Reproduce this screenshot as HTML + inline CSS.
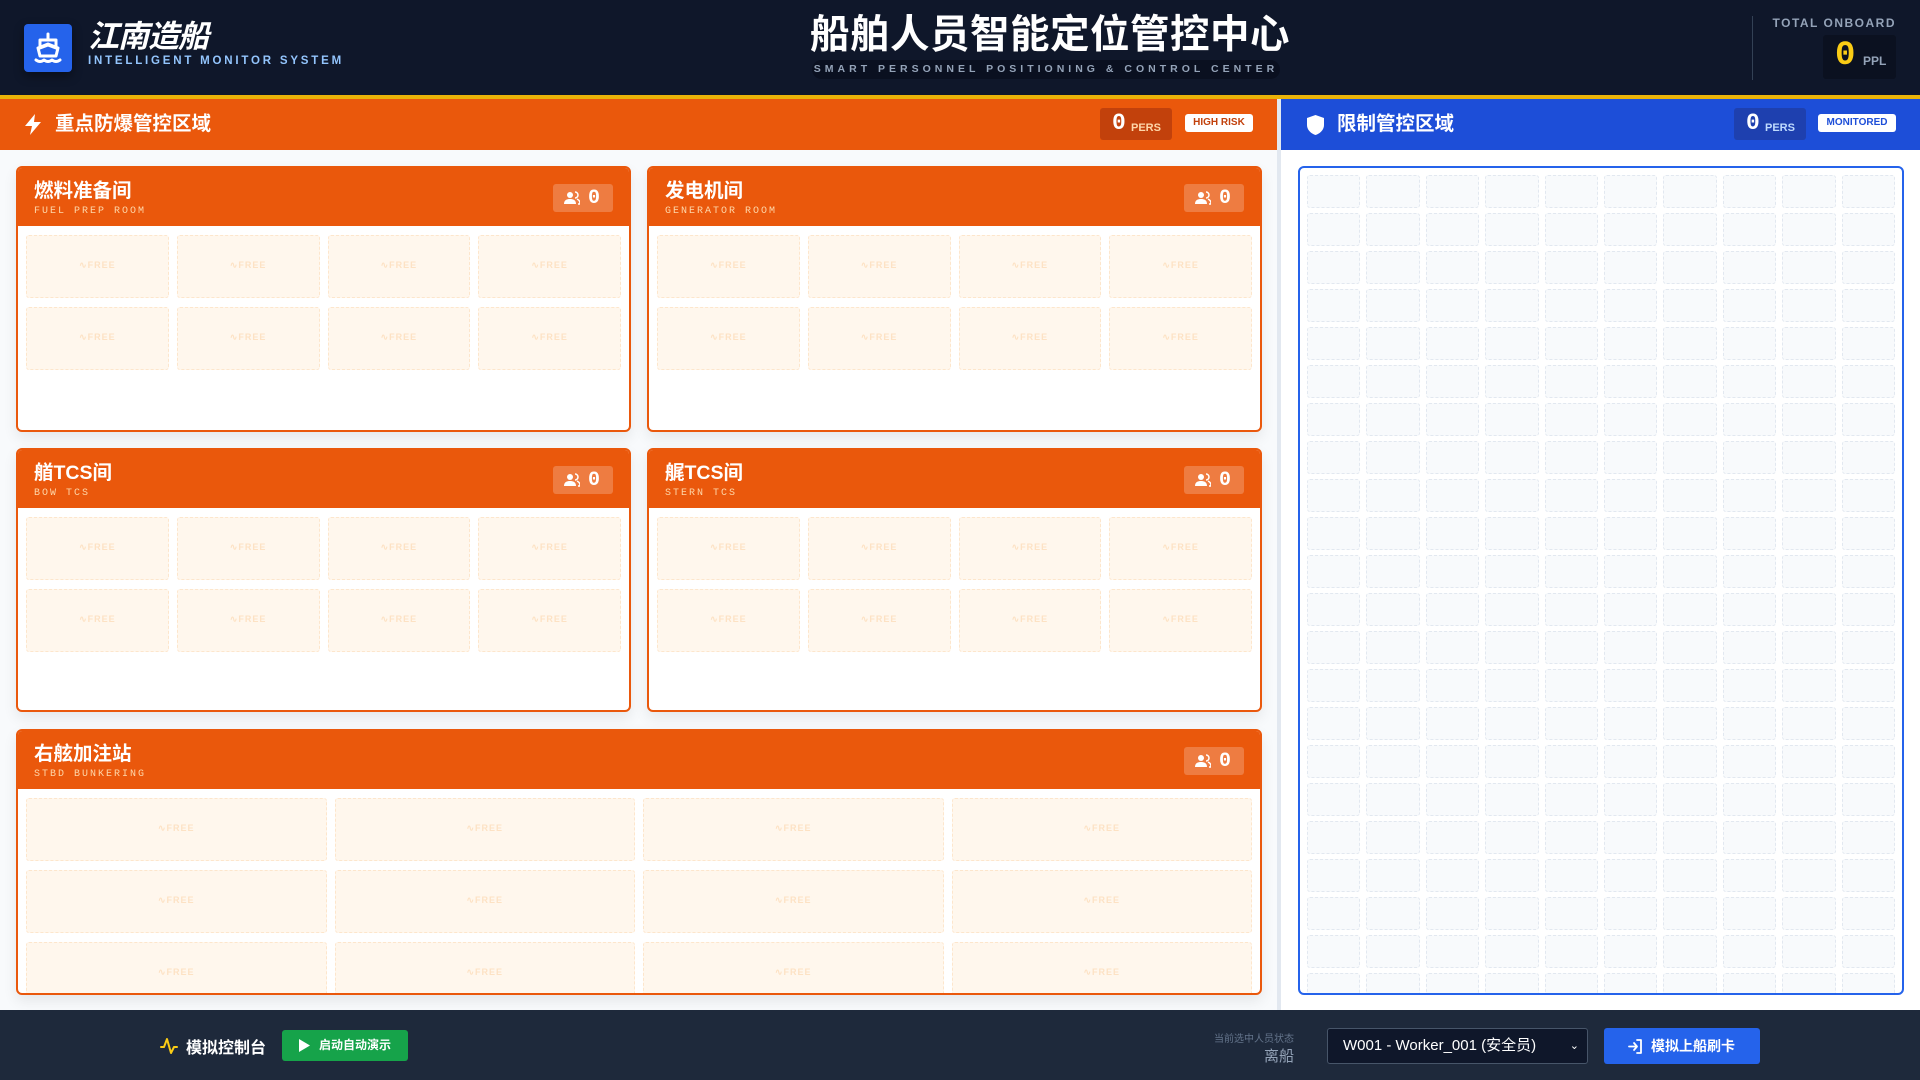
<!DOCTYPE html>
<html><head><meta charset="utf-8"><style>
*{box-sizing:border-box;margin:0;padding:0}
body{width:1920px;height:1080px;overflow:hidden;background:#f8fafc;font-family:"Liberation Sans","Noto Sans CJK SC",sans-serif;position:relative}
.mono{font-family:"Liberation Mono","DejaVu Sans Mono",monospace}
#hdr{position:absolute;left:0;top:0;width:1920px;background:#0f172a;border-bottom:4px solid #eab308;height:99px}
.logo{position:absolute;left:24px;top:24px;width:48px;height:48px;background:#2563eb;border-radius:4px;box-shadow:0 4px 10px rgba(0,0,0,.4)}
.brand{position:absolute;left:88px;top:18px;color:#fff;font-size:31px;line-height:38px;font-weight:bold;font-style:italic;letter-spacing:-1px}
.brandsub{position:absolute;left:88px;top:55px;color:#93c5fd;font-size:11.5px;font-weight:bold;letter-spacing:2.8px;white-space:nowrap}
.title{position:absolute;left:790px;width:520px;top:10px;text-align:center;color:#fff;font-size:39.5px;line-height:50px;font-weight:bold;letter-spacing:0.5px;white-space:nowrap}
.pill{position:absolute;left:812px;top:60px;width:468px;height:19px;background:#0a1020;border-radius:10px;color:#94a3b8;font-size:10.5px;font-weight:bold;letter-spacing:4px;text-align:center;line-height:19px;white-space:nowrap}
.vdiv{position:absolute;left:1752px;top:16px;width:1px;height:64px;background:#334155}
.tot{position:absolute;right:24px;top:16px;color:#94a3b8;font-size:12px;font-weight:bold;letter-spacing:1.5px}
.totbox{position:absolute;left:1823px;top:35px;width:73px;height:44px;background:#0b1120;border-radius:3px}
.totbox .n{position:absolute;left:12px;top:2px;color:#facc15;font-size:34px;font-weight:bold}
.totbox .u{position:absolute;left:40px;top:19px;color:#94a3b8;font-size:12px;font-weight:bold}
#lp{position:absolute;left:0;top:99px;width:1277px;height:911px}
#rp{position:absolute;left:1281px;top:99px;width:639px;height:911px;background:#fff}
.vsep{position:absolute;left:1277px;top:99px;width:4px;height:911px;background:#e2e8f0}
.bar{position:absolute;left:0;top:0;width:100%;height:51px;color:#fff;font-size:19.5px;font-weight:bold}
.bar .t{position:absolute;top:12px;line-height:26px}
.pers{position:absolute;top:9px;height:32px;width:72px;border-radius:3px}
.pers .n{position:absolute;left:12px;top:2px;font-size:23px;font-weight:bold;color:#fff}
.pers .u{position:absolute;left:31px;top:14px;font-size:11px;font-weight:bold}
.badge{position:absolute;top:15px;height:18px;background:#fff;border-radius:3px;font-size:10px;font-weight:bold;text-align:center;line-height:18px}
.card{position:absolute;border:2px solid #ea580c;border-radius:6px;background:#fff;overflow:hidden;box-shadow:0 6px 14px rgba(0,0,0,.08)}
.ch{position:absolute;left:0;top:0;right:0;height:58px;background:#ea580c}
.ch .t{position:absolute;left:16px;top:11px;line-height:24px;color:#fff;font-size:19.5px;font-weight:bold}
.ch .s{position:absolute;left:16px;top:38px;color:#fed7aa;font-size:10px;letter-spacing:2px}
.cnt{position:absolute;right:16px;top:16px;width:60px;height:28px;background:rgba(255,255,255,.22);border-radius:3px}
.cnt svg{position:absolute;left:11px;top:7px}
.cnt b{position:absolute;left:35px;top:3px;color:#fff;font-size:20px}
.slots{position:absolute;left:8px;right:8px;top:67px;display:grid;gap:9px 8px}
.slots i{display:block;height:63px;background:#fff7ed;border:1px dashed #fde6cc;border-radius:3px;position:relative}
.slots i:after{content:"∿FREE";position:absolute;left:0;right:0;top:24px;text-align:center;font-style:normal;font-size:9px;font-weight:bold;color:#fde2c4;letter-spacing:1px}
.rg{position:absolute;left:1298px;top:166px;width:606px;height:829px;border:2px solid #2563eb;border-radius:6px;background:#fff;overflow:hidden}
.rg .g{position:absolute;left:7px;top:7px;right:7px;display:grid;grid-template-columns:repeat(10,1fr);gap:5px 6px}
.rg i{display:block;height:33px;background:#f8fafc;border:1px dashed #e2e8f0;border-radius:3px}
#ftr{position:absolute;left:0;top:1010px;width:1920px;height:70px;background:#1e293b}
</style></head><body>
<div id="hdr">
 <div class="logo"><svg width="48" height="48" viewBox="0 0 48 48" fill="none" stroke="#fff" stroke-width="3" stroke-linecap="round" stroke-linejoin="round"><path d="M24 10v6M16 16h16v8l-8-3-8 3z"/><path d="M14 24l10-4 10 4-2 8H16z"/><path d="M12 36c3 2 5 2 8 0 3 2 5 2 8 0 3 2 5 2 8 0"/></svg></div>
 <div class="brand">江南造船</div>
 <div class="brandsub">INTELLIGENT MONITOR SYSTEM</div>
 <div class="title">船舶人员智能定位管控中心</div>
 <div class="pill">SMART PERSONNEL POSITIONING &amp; CONTROL CENTER</div>
 <div class="vdiv"></div>
 <div class="tot">TOTAL ONBOARD</div>
 <div class="totbox"><span class="n mono">0</span><span class="u">PPL</span></div>
</div>

<div id="lp">
 <div class="bar" style="background:#ea580c">
  <svg style="position:absolute;left:24px;top:15px" width="19" height="21" viewBox="0 0 19 21"><path d="M11 0L1 12h7l-2 9 11-13h-7z" fill="#fff"/></svg>
  <span class="t" style="left:55px">重点防爆管控区域</span>
  <div class="pers" style="left:1100px;background:#c2410c"><span class="n mono">0</span><span class="u" style="color:#fed7aa">PERS</span></div>
  <div class="badge" style="left:1185px;width:68px;color:#c2410c">HIGH RISK</div>
 </div>
</div>
<div class="vsep"></div>
<div id="rp">
 <div class="bar" style="background:#1d4ed8">
  <svg style="position:absolute;left:26px;top:16px" width="17" height="20" viewBox="0 0 17 20"><path d="M8.5 0L17 3v7c0 5-4 8.5-8.5 10C4 18.5 0 15 0 10V3z" fill="#fff"/></svg>
  <span class="t" style="left:56px">限制管控区域</span>
  <div class="pers" style="left:453px;background:#1e40af"><span class="n mono">0</span><span class="u" style="color:#bfdbfe">PERS</span></div>
  <div class="badge" style="left:537px;width:78px;color:#1d4ed8">MONITORED</div>
 </div>
</div>

<div class="card" style="left:16px;top:166px;width:615px;height:266px">
 <div class="ch"><span class="t">燃料准备间</span><span class="s mono">FUEL PREP ROOM</span><div class="cnt"><svg width="16" height="14" viewBox="0 0 16 14" fill="#fff"><circle cx="6" cy="4" r="3"/><path d="M0 13c0-4 3-5 6-5s6 1 6 5z"/><path d="M11 1a3 3 0 010 6M13 8c2 1 3 2 3 5h-2" stroke="#fff" stroke-width="1.5" fill="none"/></svg><b class="mono">0</b></div></div>
 <div class="slots" style="grid-template-columns:repeat(4,1fr)"><i></i><i></i><i></i><i></i><i></i><i></i><i></i><i></i></div>
</div>
<div class="card" style="left:647px;top:166px;width:615px;height:266px">
 <div class="ch"><span class="t">发电机间</span><span class="s mono">GENERATOR ROOM</span><div class="cnt"><svg width="16" height="14" viewBox="0 0 16 14" fill="#fff"><circle cx="6" cy="4" r="3"/><path d="M0 13c0-4 3-5 6-5s6 1 6 5z"/><path d="M11 1a3 3 0 010 6M13 8c2 1 3 2 3 5h-2" stroke="#fff" stroke-width="1.5" fill="none"/></svg><b class="mono">0</b></div></div>
 <div class="slots" style="grid-template-columns:repeat(4,1fr)"><i></i><i></i><i></i><i></i><i></i><i></i><i></i><i></i></div>
</div>
<div class="card" style="left:16px;top:448px;width:615px;height:264px">
 <div class="ch"><span class="t">艏TCS间</span><span class="s mono">BOW TCS</span><div class="cnt"><svg width="16" height="14" viewBox="0 0 16 14" fill="#fff"><circle cx="6" cy="4" r="3"/><path d="M0 13c0-4 3-5 6-5s6 1 6 5z"/><path d="M11 1a3 3 0 010 6M13 8c2 1 3 2 3 5h-2" stroke="#fff" stroke-width="1.5" fill="none"/></svg><b class="mono">0</b></div></div>
 <div class="slots" style="grid-template-columns:repeat(4,1fr)"><i></i><i></i><i></i><i></i><i></i><i></i><i></i><i></i></div>
</div>
<div class="card" style="left:647px;top:448px;width:615px;height:264px">
 <div class="ch"><span class="t">艉TCS间</span><span class="s mono">STERN TCS</span><div class="cnt"><svg width="16" height="14" viewBox="0 0 16 14" fill="#fff"><circle cx="6" cy="4" r="3"/><path d="M0 13c0-4 3-5 6-5s6 1 6 5z"/><path d="M11 1a3 3 0 010 6M13 8c2 1 3 2 3 5h-2" stroke="#fff" stroke-width="1.5" fill="none"/></svg><b class="mono">0</b></div></div>
 <div class="slots" style="grid-template-columns:repeat(4,1fr)"><i></i><i></i><i></i><i></i><i></i><i></i><i></i><i></i></div>
</div>
<div class="card" style="left:16px;top:729px;width:1246px;height:266px">
 <div class="ch"><span class="t">右舷加注站</span><span class="s mono">STBD BUNKERING</span><div class="cnt"><svg width="16" height="14" viewBox="0 0 16 14" fill="#fff"><circle cx="6" cy="4" r="3"/><path d="M0 13c0-4 3-5 6-5s6 1 6 5z"/><path d="M11 1a3 3 0 010 6M13 8c2 1 3 2 3 5h-2" stroke="#fff" stroke-width="1.5" fill="none"/></svg><b class="mono">0</b></div></div>
 <div class="slots" style="grid-template-columns:repeat(4,1fr);gap:9px 8px"><i></i><i></i><i></i><i></i><i></i><i></i><i></i><i></i><i></i><i></i><i></i><i></i></div>
</div>

<div class="rg"><div class="g">
<i></i><i></i><i></i><i></i><i></i><i></i><i></i><i></i><i></i><i></i>
<i></i><i></i><i></i><i></i><i></i><i></i><i></i><i></i><i></i><i></i>
<i></i><i></i><i></i><i></i><i></i><i></i><i></i><i></i><i></i><i></i>
<i></i><i></i><i></i><i></i><i></i><i></i><i></i><i></i><i></i><i></i>
<i></i><i></i><i></i><i></i><i></i><i></i><i></i><i></i><i></i><i></i>
<i></i><i></i><i></i><i></i><i></i><i></i><i></i><i></i><i></i><i></i>
<i></i><i></i><i></i><i></i><i></i><i></i><i></i><i></i><i></i><i></i>
<i></i><i></i><i></i><i></i><i></i><i></i><i></i><i></i><i></i><i></i>
<i></i><i></i><i></i><i></i><i></i><i></i><i></i><i></i><i></i><i></i>
<i></i><i></i><i></i><i></i><i></i><i></i><i></i><i></i><i></i><i></i>
<i></i><i></i><i></i><i></i><i></i><i></i><i></i><i></i><i></i><i></i>
<i></i><i></i><i></i><i></i><i></i><i></i><i></i><i></i><i></i><i></i>
<i></i><i></i><i></i><i></i><i></i><i></i><i></i><i></i><i></i><i></i>
<i></i><i></i><i></i><i></i><i></i><i></i><i></i><i></i><i></i><i></i>
<i></i><i></i><i></i><i></i><i></i><i></i><i></i><i></i><i></i><i></i>
<i></i><i></i><i></i><i></i><i></i><i></i><i></i><i></i><i></i><i></i>
<i></i><i></i><i></i><i></i><i></i><i></i><i></i><i></i><i></i><i></i>
<i></i><i></i><i></i><i></i><i></i><i></i><i></i><i></i><i></i><i></i>
<i></i><i></i><i></i><i></i><i></i><i></i><i></i><i></i><i></i><i></i>
<i></i><i></i><i></i><i></i><i></i><i></i><i></i><i></i><i></i><i></i>
<i></i><i></i><i></i><i></i><i></i><i></i><i></i><i></i><i></i><i></i>
<i></i><i></i><i></i><i></i><i></i><i></i><i></i><i></i><i></i><i></i>
</div></div>

<div id="ftr">
 <svg style="position:absolute;left:160px;top:27px" width="18" height="18" viewBox="0 0 18 18" fill="none" stroke="#facc15" stroke-width="2" stroke-linejoin="round" stroke-linecap="round"><path d="M1 10h3l3-8 4 14 3-6h3"/></svg>
 <span style="position:absolute;left:186px;top:24px;color:#fff;font-size:16px;font-weight:bold">模拟控制台</span>
 <div style="position:absolute;left:282px;top:20px;width:126px;height:31px;background:#16a34a;border-radius:3px;color:#fff;font-size:12px;font-weight:bold;line-height:31px">
  <svg style="position:absolute;left:17px;top:9px" width="11" height="13" viewBox="0 0 11 13"><path d="M0 0l11 6.5L0 13z" fill="#fff"/></svg>
  <span style="position:absolute;left:37px">启动自动演示</span></div>
 <span style="position:absolute;right:626px;top:20px;color:#64748b;font-size:10px">当前选中人员状态</span>
 <span style="position:absolute;right:626px;top:35px;color:#94a3b8;font-size:15px">离船</span>
 <div style="position:absolute;left:1327px;top:18px;width:261px;height:36px;background:#0f172a;border:1px solid #475569;border-radius:3px;color:#fff;font-size:15px;line-height:34px;padding-left:15px">W001 - Worker_001 (安全员)<span style="position:absolute;right:8px;top:0;font-size:11px">⌄</span></div>
 <div style="position:absolute;left:1604px;top:18px;width:156px;height:36px;background:#2563eb;border-radius:3px;color:#fff;font-size:14px;font-weight:bold;line-height:36px">
  <svg style="position:absolute;left:24px;top:11px" width="15" height="15" viewBox="0 0 15 15" fill="none" stroke="#fff" stroke-width="1.8" stroke-linecap="round" stroke-linejoin="round"><path d="M9 1h4v13H9M1 7.5h8M6 4l3 3.5L6 11"/></svg>
  <span style="position:absolute;left:47px">模拟上船刷卡</span></div>
</div>
</body></html>
